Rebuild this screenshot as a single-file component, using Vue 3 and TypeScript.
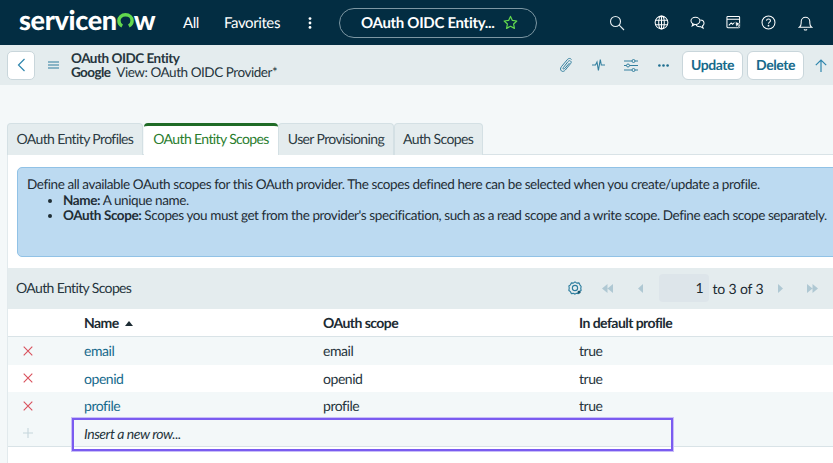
<script setup lang="ts">
interface ScopeRow {
  name: string
  scope: string
  inDefault: string
}

const tabs = ['OAuth Entity Profiles', 'OAuth Entity Scopes', 'User Provisioning', 'Auth Scopes']
const activeTab = 'OAuth Entity Scopes'

const rows: ScopeRow[] = [
  { name: 'email', scope: 'email', inDefault: 'true' },
  { name: 'openid', scope: 'openid', inDefault: 'true' },
  { name: 'profile', scope: 'profile', inDefault: 'true' },
]
</script>

<template>
  <div class="page">
    <header class="topbar">
      <div class="logo">
        <span>servicen</span>
        <svg class="logo-o" width="17" height="15" viewBox="0 0 17 15" fill="none" stroke="#62d84e" stroke-width="3.400">
          <path d="M5.200 13C3 11.900 1.900 10 1.900 7.700 1.900 4.300 4.700 1.800 8.500 1.800s6.600 2.500 6.600 5.900c0 2.300-1.100 4.200-3.300 5.300" />
        </svg>
        <span>w</span>
      </div>
      <nav class="topnav">
        <span class="nav-all">All</span>
        <span class="nav-fav">Favorites</span>
        <svg class="kebab" width="4" height="12" viewBox="0 0 4 12">
          <circle cx="2" cy="1.6" r="1.4" fill="#fff" />
          <circle cx="2" cy="6" r="1.4" fill="#fff" />
          <circle cx="2" cy="10.4" r="1.4" fill="#fff" />
        </svg>
      </nav>
      <div class="pill">
        <span>OAuth OIDC Entity...</span>
        <svg width="15" height="15" viewBox="0 0 16 16">
          <path d="M8 1.5l2 4.3 4.7.6-3.4 3.2.9 4.7L8 12l-4.200 2.300.9-4.700L1.300 6.400 6 5.800z" fill="none" stroke="#62d84e" stroke-width="1.300" stroke-linejoin="round" />
        </svg>
      </div>
      <div class="top-icons">
        <svg class="ti search" width="16" height="16" viewBox="0 0 16 16" fill="none" stroke="#e6edf0" stroke-width="1.100">
          <circle cx="6.500" cy="6.500" r="5" />
          <path d="M10.200 10.200L15 15" />
        </svg>
        <svg class="ti globe" width="15" height="15" viewBox="0 0 16 16" fill="none" stroke="#fff" stroke-width="1.100">
          <circle cx="8" cy="8" r="6.800" />
          <ellipse cx="8" cy="8" rx="3" ry="6.800" />
          <path d="M1.500 5.700h13M1.500 10.300h13M8 1.200v13.600" />
        </svg>
        <svg class="ti chat" width="15" height="14" viewBox="0 0 16 15" fill="none" stroke="#fff" stroke-width="1.100">
          <ellipse cx="5.800" cy="5.200" rx="4.800" ry="3.900" />
          <path d="M3 8.500L2.300 10.700 5 9.100" />
          <path d="M11 4.300c2.400.2 4 1.700 4 3.500 0 1.200-.7 2.200-1.700 2.900l.7 2.300-2.800-1.600c-2.500.2-4.500-.9-5-2.800" />
        </svg>
        <svg class="ti card" width="15" height="15" viewBox="0 0 16 16" fill="none" stroke="#fff" stroke-width="1.100">
          <rect x="1" y="1.500" width="13.500" height="12" rx="1" />
          <path d="M1 4.500h13.500M3 11l2.500-2.500 1.500 1.500 2-2" />
          <path d="M10 7l5.500 2.500-2.300.9 2 3-1 .8-2-3-1.400 1.700z" fill="#fff" stroke="#032d42" stroke-width=".6" />
        </svg>
        <svg class="ti help" width="15" height="15" viewBox="0 0 16 16" fill="none" stroke="#fff" stroke-width="1.100">
          <circle cx="8" cy="8" r="6.900" />
          <path d="M5.900 6.200c0-1.200 1-2 2.100-2 1.200 0 2.100.8 2.100 1.900 0 1.600-2.100 1.600-2.100 3.300" />
          <circle cx="8" cy="11.400" r=".4" fill="#fff" />
        </svg>
        <svg class="ti bell" width="15" height="16" viewBox="0 0 16 17" fill="none" stroke="#fff" stroke-width="1.100">
          <path d="M1.500 13c1.400-1 1.900-2.300 1.900-4.500V7a4.600 4.600 0 0 1 9.200 0v1.500c0 2.200.5 3.500 1.900 4.500z" />
          <path d="M6.300 15.200c.9.800 2.500.8 3.400 0" />
        </svg>
      </div>
    </header>

    <div class="formbar">
      <button class="back-btn">
        <svg width="9" height="14" viewBox="0 0 9 14" fill="none" stroke="#2f86ad" stroke-width="1.200">
          <path d="M7.500 1L1.500 7l6 6" />
        </svg>
      </button>
      <svg class="menu-icon" width="11" height="8" viewBox="0 0 11 8" fill="none" stroke="#2c7d9e" stroke-width="1.200">
        <path d="M0 1h11M0 4h11M0 7h11" />
      </svg>
      <div class="form-title">
        <div class="form-name">OAuth OIDC Entity</div>
        <div class="form-sub"><b>Google</b><span class="form-view">View: OAuth OIDC Provider*</span></div>
      </div>
      <div class="form-actions">
        <svg class="fa clip" width="14" height="16" viewBox="0 0 14 16" fill="none" stroke="#34809f" stroke-width="1">
          <path d="M12.500 2.500c-1-1.300-2.700-1.400-3.900-.2L2.400 9.700c-1.200 1.600-1.100 3.300 0 4.200 1.100.9 2.700.6 3.900-.9l5.300-6.400c.8-1 .8-2-.1-2.600-.8-.6-1.700-.3-2.500.6L4.400 10.500c-.5.700-.5 1.200-.1 1.500.4.300.9.100 1.400-.5L10.500 6" />
        </svg>
        <svg class="fa pulse" width="13" height="14" viewBox="0 0 13 14" fill="none" stroke="#34809f" stroke-width="1.100">
          <path d="M0 7h3.500l1.500-3 1.400 8.500L8.300 1.500l1 5.500H13" />
        </svg>
        <svg class="fa sliders" width="14" height="13" viewBox="0 0 14 13" fill="none" stroke="#34809f" stroke-width="1">
          <path d="M0 2h8M11 2h3M0 6.500h2.500M5.500 6.500H14M0 11h8M11 11h3" />
          <circle cx="9.500" cy="2" r="1.500" />
          <circle cx="4" cy="6.500" r="1.500" />
          <circle cx="9.500" cy="11" r="1.500" />
        </svg>
        <svg class="fa more" width="11" height="3" viewBox="0 0 11 3" fill="#1f6f91">
          <circle cx="1.400" cy="1.500" r="1.300" />
          <circle cx="5.500" cy="1.500" r="1.300" />
          <circle cx="9.600" cy="1.500" r="1.300" />
        </svg>
        <button class="act-btn update">Update</button>
        <button class="act-btn delete">Delete</button>
        <svg class="fa up" width="12" height="13" viewBox="0 0 12 13" fill="none" stroke="#2f86ad" stroke-width="1.200">
          <path d="M6 13V1M.8 6.200L6 1l5.200 5.200" />
        </svg>
      </div>
    </div>

    <main class="content">
      <div class="tabs">
        <div v-for="tab in tabs" :key="tab" class="tab" :class="{ active: tab === activeTab }">{{ tab }}</div>
      </div>

      <section class="panel">
        <div class="info">
          <div>Define all available OAuth scopes for this OAuth provider. The scopes defined here can be selected when you create/update a profile.</div>
          <ul>
            <li><b>Name:</b> A unique name.</li>
            <li><b>OAuth Scope:</b> Scopes you must get from the provider's specification, such as a read scope and a write scope. Define each scope separately.</li>
          </ul>
        </div>

        <div class="list-head">
          <span class="list-title">OAuth Entity Scopes</span>
          <div class="pager">
            <svg class="gear" width="14" height="14" viewBox="0 0 16 16" fill="none" stroke="#2c7d9e" stroke-width="1.300" stroke-linejoin="round">
              <path d="M8 1l2 1.400 2.600-.2 1 2.200L15 6.300 14.600 8.700 15 10.800l-2 1.300-1.200 2.300-2.300-.4L8 15l-1.900-.9-2.300.3-1-2.200L1 10.800 1.400 8 1 5.700l1.800-1.300 1-2.200 2.300.2z" />
              <circle cx="8" cy="8" r="3" />
              <circle cx="12.600" cy="12.800" r="1.700" fill="#14566f" stroke="none" />
            </svg>
            <svg class="pg first" width="11" height="9" viewBox="0 0 11 9" fill="#afc8d3"><path d="M5.500 0v9L0 4.500zM11 0v9L5.500 4.500z" /></svg>
            <svg class="pg prev" width="5" height="9" viewBox="0 0 5 9" fill="#afc8d3"><path d="M5 0v9L0 4.500z" /></svg>
            <div class="page-input">1</div>
            <span class="page-text">to 3 of 3</span>
            <svg class="pg next" width="5" height="9" viewBox="0 0 5 9" fill="#afc8d3"><path d="M0 0v9l5-4.500z" /></svg>
            <svg class="pg last" width="11" height="9" viewBox="0 0 11 9" fill="#afc8d3"><path d="M0 0v9l5.500-4.500zM5.500 0v9L11 4.500z" /></svg>
          </div>
        </div>

        <div class="grid-row head">
          <div></div>
          <div class="name-head">Name
            <svg width="8" height="5" viewBox="0 0 8 5" fill="#1c2b33"><path d="M4 0l4 5H0z" /></svg>
          </div>
          <div>OAuth scope</div>
          <div>In default profile</div>
        </div>
        <div v-for="row in rows" :key="row.name" class="grid-row body">
          <div class="del">
            <svg width="10" height="10" viewBox="0 0 10 10" fill="none" stroke="#d9505c" stroke-width="1.100">
              <path d="M.7.700l8.600 8.600M9.300.700L.7 9.300" />
            </svg>
          </div>
          <div class="link">{{ row.name }}</div>
          <div>{{ row.scope }}</div>
          <div>{{ row.inDefault }}</div>
        </div>
        <div class="grid-row body insert">
          <div class="del">
            <svg width="10" height="10" viewBox="0 0 10 10" fill="none" stroke="#c5d6dc" stroke-width="1.100">
              <path d="M5 0v10M0 5h10" />
            </svg>
          </div>
          <div class="new-row">Insert a new row...</div>
          <div class="highlight"></div>
        </div>
      </section>
    </main>
  </div>
</template>

<style>
html,
body {
  margin: 0;
  background: #f4f8f9;
  overflow: hidden;
}
</style>

<style scoped>
.page {
  width: 833px;
  height: 463px;
  overflow: hidden;
  font-family: Lato, "Open Sans", sans-serif;
  color: #1c2b33;
  background: #f4f8f9;
  text-rendering: geometricPrecision;
}

.topbar {
  height: 45px;
  background: #032d42;
  display: flex;
  align-items: center;
  color: #fff;
  box-sizing: border-box;
  padding-left: 19px;
}

.logo {
  width: 133px;
  display: flex;
  align-items: flex-end;
  font-size: 27px;
  font-weight: 900;
  letter-spacing: -0.350px;
  line-height: 30px;
  color: #fff;
  margin-top: -5px;
  white-space: nowrap;
}

.logo-o {
  margin: 0 0 7px 0;
  flex: none;
}

.topnav {
  display: flex;
  align-items: center;
  margin-left: 31px;
  font-size: 15px;
  letter-spacing: -0.400px;
}

.nav-fav {
  margin-left: 25px;
}

.kebab {
  margin-left: 28px;
}

.pill {
  margin-left: 27px;
  width: 198px;
  height: 30px;
  box-sizing: border-box;
  border: 1px solid #7d97a3;
  border-radius: 15px;
  display: flex;
  align-items: center;
  padding-left: 21px;
  gap: 8px;
  font-size: 15px;
  font-weight: 700;
  letter-spacing: -0.300px;
  white-space: nowrap;
}

.top-icons {
  display: flex;
  align-items: center;
  margin-left: 72px;
}

.search {
  margin-right: 29px;
}

.globe,
.chat {
  margin-right: 21px;
}

.card {
  margin-right: 20px;
}

.help {
  margin-right: 22px;
}

.formbar {
  height: 40px;
  background: #e4ecee;
  display: flex;
  align-items: center;
  box-sizing: border-box;
  padding-left: 7px;
}

.back-btn {
  width: 28px;
  height: 29px;
  box-sizing: border-box;
  background: #fff;
  border: 1px solid #c9d6db;
  border-radius: 5px;
  display: flex;
  align-items: center;
  justify-content: center;
  padding: 0;
}

.menu-icon {
  margin-left: 13px;
}

.form-title {
  margin-left: 12px;
  font-size: 13.500px;
  line-height: 14px;
  letter-spacing: -0.480px;
  color: #26353d;
  white-space: nowrap;
}

.form-name {
  font-weight: 700;
}

.form-sub b {
  font-weight: 700;
  letter-spacing: -0.600px;
}

.form-view {
  margin-left: 6px;
  letter-spacing: -0.450px;
}

.form-actions {
  margin-left: auto;
  display: flex;
  align-items: center;
  padding-right: 6px;
}

.clip {
  margin-right: 19px;
}

.pulse {
  margin-right: 19px;
}

.sliders {
  margin-right: 20px;
}

.more {
  margin-right: 13px;
}

.act-btn {
  height: 29px;
  box-sizing: border-box;
  background: #fff;
  border: 1px solid #c9d6db;
  border-radius: 6px;
  font-family: inherit;
  font-size: 14px;
  font-weight: 700;
  letter-spacing: -0.450px;
  color: #176a8c;
  padding: 0 0 1px;
  text-rendering: geometricPrecision;
}

.update {
  width: 61px;
  margin-right: 4px;
}

.delete {
  width: 57px;
  margin-right: 11px;
}

.content {
  padding: 38px 0 0 7px;
}

.tabs {
  display: flex;
  height: 31px;
}

.tab {
  box-sizing: border-box;
  height: 32px;
  padding: 0 8.500px;
  background: #e4ecee;
  border: 1px solid #d4e0e4;
  border-bottom: none;
  border-radius: 4px 4px 0 0;
  font-size: 14px;
  letter-spacing: -0.620px;
  line-height: 29px;
  color: #2b3a42;
  white-space: nowrap;
}

.tab.active {
  position: relative;
  z-index: 1;
  margin-left: 1px;
  padding: 0 9.500px;
  background: #fff;
  color: #2a7d2e;
  border: none;
  border-top: 3px solid #1f6b26;
  line-height: 25px;
}

.panel {
  background: #fff;
  border-top: 1px solid #d9e3e7;
  border-left: 1px solid #e2eaed;
  height: 309px;
  width: 840px;
  box-sizing: border-box;
}

.info {
  margin: 12px 0 0 9px;
  height: 90px;
  box-sizing: border-box;
  padding: 9px 9px;
  background: #bcdaf1;
  border: 1px solid #91c2e6;
  border-radius: 5px;
  font-size: 13.500px;
  letter-spacing: -0.410px;
  line-height: 15.500px;
  color: #1f2d35;
  white-space: nowrap;
}

.info ul {
  margin: 0;
  padding-left: 36px;
}

.info b {
  font-weight: 700;
}

.list-head {
  margin-top: 11px;
  height: 41px;
  background: #e4ecee;
  display: flex;
  align-items: center;
  padding-left: 8px;
  width: 825px;
  box-sizing: border-box;
}

.list-title {
  font-size: 14px;
  letter-spacing: -0.630px;
  color: #26353d;
  margin-top: -2px;
}

.pager {
  margin-left: auto;
  display: flex;
  align-items: center;
  padding-right: 15.500px;
  margin-top: -1px;
}

.gear {
  margin-right: 20.500px;
}

.first {
  margin-right: 25px;
}

.prev {
  margin-right: 15.500px;
}

.page-input {
  width: 50px;
  height: 28px;
  box-sizing: border-box;
  background: #dde5ea;
  border-radius: 4px;
  font-size: 14px;
  line-height: 28px;
  text-align: right;
  padding-right: 5px;
}

.page-text {
  width: 50px;
  margin-left: 4px;
  font-size: 14px;
  letter-spacing: -0.150px;
  margin-right: 15px;
  white-space: nowrap;
}

.next {
  margin-right: 24px;
}

.grid-row {
  display: grid;
  grid-template-columns: 65px 250px 256px 1fr;
  position: relative;
  align-items: center;
  font-size: 14px;
  letter-spacing: -0.450px;
  width: 825px;
  box-sizing: border-box;
}

.grid-row > div:nth-child(2) {
  padding-left: 11px;
}

.head {
  height: 28px;
  font-weight: 700;
  letter-spacing: -0.550px;
  color: #1c2b33;
  border-bottom: 1px solid #d9e3e7;
}

.name-head svg {
  margin-left: 3px;
  vertical-align: 2px;
}

.body {
  height: 27.500px;
  color: #26353d;
}

.body:nth-child(even) {
  background: #f3f8f9;
}

.del {
  padding-left: 15px;
  display: flex;
  align-items: center;
}

.link {
  color: #176a8c;
}

.insert {
  background: #f3f8f9;
  border-bottom: 1px solid #d9e3e7;
}

.new-row {
  font-style: italic;
  grid-column: 2 / 4;
  padding-top: 1px;
}

.highlight {
  position: absolute;
  left: 64px;
  top: -2px;
  width: 601px;
  height: 33px;
  box-sizing: border-box;
  border: 2px solid #7a5cf0;
  box-shadow: 0 0 0 1px #c9bdf8;
}
</style>
